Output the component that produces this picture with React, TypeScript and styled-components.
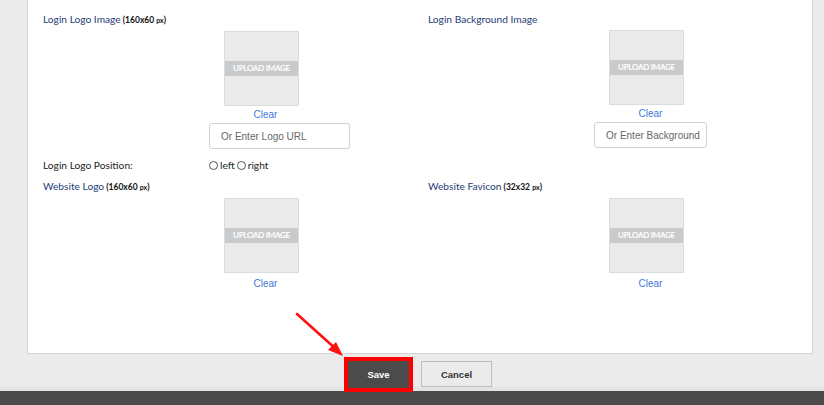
import styled, { createGlobalStyle } from "styled-components";

const GlobalStyle = createGlobalStyle`
  html, body {
    margin: 0;
    padding: 0;
    background: #ebebeb;
    font-family: Lato, "Liberation Sans", sans-serif;
  }
`;

interface UploadField {
  title: string;
  size?: string;
  placeholder?: string;
}

const topRow: UploadField[] = [
  { title: "Login Logo Image", size: "160x60", placeholder: "Or Enter Logo URL" },
  { title: "Login Background Image", placeholder: "Or Enter Background" },
];

const bottomRow: UploadField[] = [
  { title: "Website Logo", size: "160x60" },
  { title: "Website Favicon", size: "32x32" },
];

function Field({ title, size, placeholder, bottom }: UploadField & { bottom?: boolean }) {
  return (
    <Column>
      <Label>
        {title}
        {size && (
          <Hint>
            {" "}({size} <small>px</small>)
          </Hint>
        )}
      </Label>
      <FieldBody>
        <Uploader>
          <UploadBox>
            <UploadBand>UPLOAD IMAGE</UploadBand>
          </UploadBox>
          <ClearLink $bottom={bottom}>Clear</ClearLink>
        </Uploader>
        {placeholder && <UrlInput placeholder={placeholder} $wide={placeholder.includes("Logo")} />}
      </FieldBody>
    </Column>
  );
}

export default function App() {
  return (
    <>
      <GlobalStyle />
      <Page>
        <Panel>
          <Row>
            {topRow.map((f) => (
              <Field key={f.title} {...f} />
            ))}
          </Row>
          <PositionRow>
            <PlainLabel>Login Logo Position:</PlainLabel>
            <RadioGroup>
              <RadioLabel>
                <Radio type="radio" name="pos" />
                left
              </RadioLabel>
              <RadioLabel>
                <Radio type="radio" name="pos" />
                right
              </RadioLabel>
            </RadioGroup>
          </PositionRow>
          <Row $bottom>
            {bottomRow.map((f) => (
              <Field key={f.title} {...f} bottom />
            ))}
          </Row>
        </Panel>
        <Actions>
          <SaveButton>Save</SaveButton>
          <CancelButton>Cancel</CancelButton>
          <Arrow width="60" height="50" viewBox="0 0 60 50">
            <line x1="2" y1="2" x2="42" y2="38" stroke="#ff1010" strokeWidth="2.6" strokeLinecap="round" />
            <polygon points="48,44 33,38 41,30" fill="#ff1010" />
          </Arrow>
        </Actions>
      </Page>
      <Strip />
      <DarkBar />
    </>
  );
}

const Page = styled.div`
  padding: 0 11px 0 27px;
`;

const Panel = styled.div`
  background: #fff;
  border: 1px solid #d4d4d4;
  border-top: none;
  height: 354px;
  box-sizing: border-box;
  padding: 12px 0 0 15px;
`;

const Row = styled.div<{ $bottom?: boolean }>`
  display: grid;
  grid-template-columns: 385px 1fr;
  margin-top: ${(p) => (p.$bottom ? "7px" : "0")};
`;

const Column = styled.div`
  display: flex;
  flex-direction: column;
`;

const Label = styled.div`
  font-size: 10.2px;
  line-height: 14px;
  color: #253d78;
  margin-bottom: 4px;
`;

const Hint = styled.span`
  font-size: 8.5px;
  font-weight: 700;
  color: #111;
  small {
    font-size: 7px;
  }
`;

const FieldBody = styled.div`
  padding-left: 166px;
  display: flex;
  flex-direction: column;
  align-items: flex-start;
`;

const Uploader = styled.div`
  margin-left: 15px;
  width: 83px;
  display: flex;
  flex-direction: column;
  align-items: flex-start;
`;

const UploadBox = styled.div`
  width: 75px;
  height: 75px;
  box-sizing: border-box;
  border: 1px solid #dcdcdc;
  background: #ebebeb;
  display: flex;
  align-items: center;
`;

const UploadBand = styled.div`
  flex: 1;
  height: 15px;
  background: #c9cacc;
  color: #fff;
  font-size: 8px;
  font-weight: 700;
  letter-spacing: -0.3px;
  line-height: 15px;
  text-align: center;
`;

const ClearLink = styled.a<{ $bottom?: boolean }>`
  align-self: stretch;
  text-align: center;
  font-family: "Liberation Sans", Arial, sans-serif;
  font-size: 10px;
  line-height: 14px;
  margin-top: ${(p) => (p.$bottom ? "4px" : "2px")};
  color: #3f78d8;
  cursor: pointer;
`;

const UrlInput = styled.input<{ $wide?: boolean }>`
  margin-top: 1px;
  width: ${(p) => (p.$wide ? "141px" : "113px")};
  height: 26px;
  box-sizing: border-box;
  border: 1px solid #d2d2d2;
  border-radius: 3px;
  padding: 0 0 0 11px;
  font-family: "Liberation Sans", Arial, sans-serif;
  font-size: 10px;
  outline: none;
  &::placeholder {
    color: #666;
  }
`;

const PositionRow = styled.div`
  display: flex;
  align-items: center;
  margin-top: 9px;
  height: 14px;
`;

const PlainLabel = styled.div`
  width: 166px;
  font-size: 10.2px;
  color: #222;
`;

const RadioGroup = styled.div`
  display: flex;
  gap: 2px;
`;

const RadioLabel = styled.label`
  display: flex;
  align-items: center;
  font-size: 10.2px;
  color: #222;
`;

const Radio = styled.input`
  appearance: none;
  width: 9px;
  height: 9px;
  margin: 0 2px 0 0;
  border: 1px solid #555;
  border-radius: 50%;
  box-sizing: border-box;
  background: #fff;
`;

const Actions = styled.div`
  position: relative;
  display: flex;
  justify-content: center;
  align-items: flex-start;
  gap: 12px;
  height: 33px;
  padding-top: 7px;
  box-sizing: border-box;
`;

const BaseButton = styled.button`
  font-family: "Liberation Sans", Arial, sans-serif;
  font-weight: 700;
  font-size: 9.5px;
  box-sizing: border-box;
  cursor: pointer;
`;

const SaveButton = styled(BaseButton)`
  width: 61px;
  height: 27px;
  background: #4b4b4b;
  color: #fff;
  border: none;
  outline: 4px solid #ff0000;
  outline-offset: 0;
  border-radius: 0;
`;

const CancelButton = styled(BaseButton)`
  width: 71px;
  height: 26px;
  background: #ebebeb;
  color: #333;
  border: 1px solid #bdbdbd;
`;

const Arrow = styled.svg`
  position: absolute;
  left: 268px;
  top: -42px;
  overflow: visible;
`;

const Strip = styled.div`
  height: 4px;
  background: #e3e3e3;
`;

const DarkBar = styled.div`
  height: 14px;
  background: #4a4a4a;
`;
